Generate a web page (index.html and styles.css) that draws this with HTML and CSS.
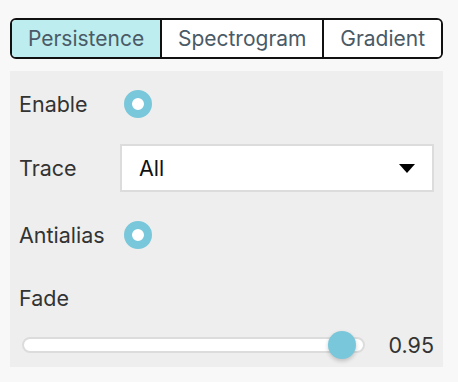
FILE: index.html
```html
<!DOCTYPE html>
<html lang="en">
<head>
    <meta charset="UTF-8">
    <meta name="viewport" content="width=device-width, initial-scale=1.0">
    <title>Persistence settings</title>
    <link rel="stylesheet" href="styles.css">
</head>
<body>

<div class="settings">
    <!-- Tabs -->
    <div class="tabs">
        <button class="tab active">Persistence</button>
        <button class="tab">Spectrogram</button>
        <button class="tab">Gradient</button>
    </div>

    <div class="panel">
        <div class="row row-enable">
            <span class="label">Enable</span>
            <span class="radio"></span>
        </div>

        <div class="row row-trace">
            <span class="label">Trace</span>
            <div class="select">
                <span>All</span>
                <span class="arrow"></span>
            </div>
        </div>

        <div class="row row-antialias">
            <span class="label">Antialias</span>
            <span class="radio"></span>
        </div>

        <div class="row row-fade">
            <span class="label">Fade</span>
        </div>

        <div class="slider-row">
            <div class="slider">
                <div class="track"></div>
                <div class="thumb" style="left: 306px"></div>
            </div>
            <span class="value">0.95</span>
        </div>
    </div>
</div>

</body>
</html>
```

FILE: styles.css
```css
* {
    box-sizing: border-box;
}
body {
    margin: 0;
    background-color: #f8f8f8;
    font-family: Inter, "Noto Sans", sans-serif;
    font-size: 21.5px;
}
.settings {
    width: 433px;
    margin: 18px 0 0 10px;
}
.tabs {
    display: flex;
    height: 41px;
    border: 2px solid #111;
    border-radius: 6px;
    overflow: hidden;
    background-color: #fff;
}
.tab {
    flex: 1 1 auto;
    padding: 0 14px;
    border: none;
    border-left: 2px solid #111;
    background-color: #fff;
    color: #4a5a66;
    font-family: inherit;
    font-size: 21px;
}
.tab:first-child {
    border-left: none;
}
.tab.active {
    background-color: #bdedee;
}
.panel {
    margin-top: 12px;
    background-color: #eeeeee;
    padding: 10px 9px 7px 9px;
}
.row {
    display: flex;
    align-items: center;
}
.label {
    width: 101px;
    color: #333;
}
.row-enable {
    height: 46px;
}
.row-trace {
    margin-top: 17px;
    height: 48px;
}
.row-antialias {
    margin-top: 20px;
    height: 46px;
}
.row-fade {
    margin-top: 28px;
    height: 24px;
}
.radio {
    width: 28px;
    height: 28px;
    margin-left: 4px;
    border-radius: 50%;
    border: 8px solid #79c7da;
    background-color: #fff;
}
.select {
    flex: 1;
    height: 48px;
    display: flex;
    align-items: center;
    justify-content: space-between;
    padding: 0 17px 0 17px;
    background-color: #fff;
    border: 2px solid #dcdcdc;
    color: #111;
}
.arrow {
    width: 0;
    height: 0;
    border-left: 8px solid transparent;
    border-right: 8px solid transparent;
    border-top: 9px solid #000;
}
.slider-row {
    display: flex;
    align-items: center;
    height: 30px;
    margin-top: 20px;
    padding-left: 3px;
}
.slider {
    position: relative;
    width: 343px;
    height: 30px;
    display: flex;
    align-items: center;
}
.track {
    width: 100%;
    height: 16px;
    border-radius: 8px;
    background-color: #fff;
    border: 2px solid #dcdcdc;
}
.thumb {
    position: absolute;
    top: 1px;
    width: 28px;
    height: 28px;
    border-radius: 50%;
    background-color: #79c7da;
    box-shadow: 0 2px 4px rgba(0, 0, 0, 0.2);
}
.value {
    margin-left: auto;
    color: #333;
}
```
